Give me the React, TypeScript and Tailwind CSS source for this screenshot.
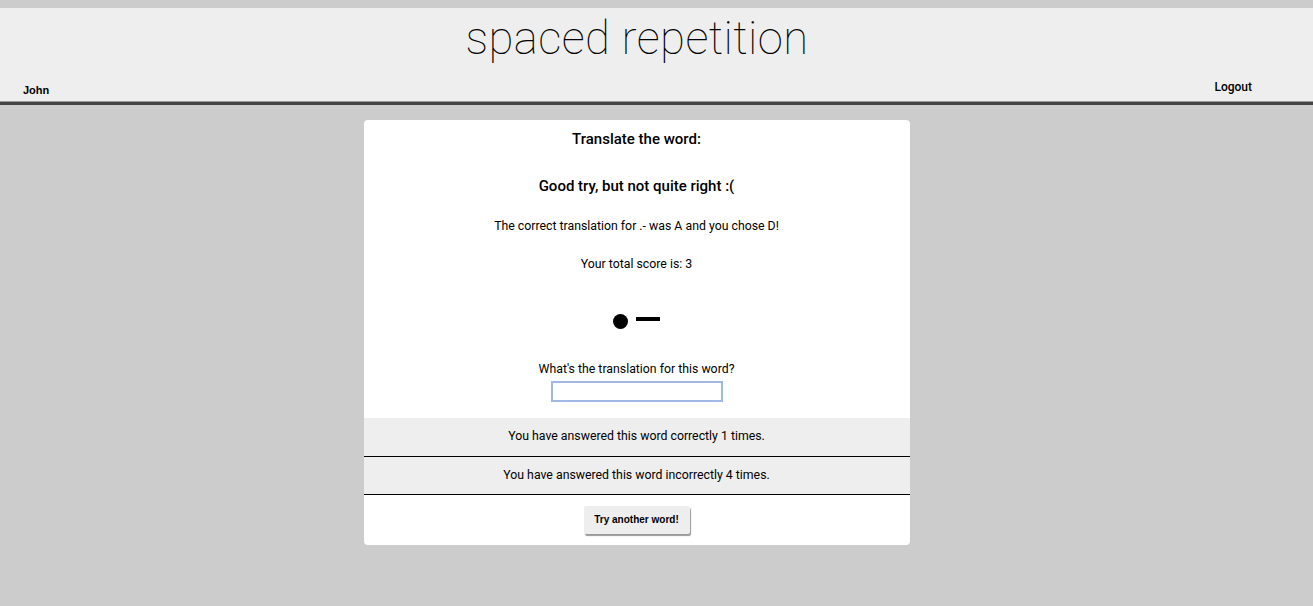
export default function App() {
  return (
    <div className="min-h-[606px] bg-[#cccccc] pt-2 font-['Roboto',sans-serif] text-black">
      <header className="h-[97px] border-b-[3px] border-[#444] bg-[#eeeeee] shadow-[0_-1px_0_#999_inset]">
        <h1 className="mr-[39px] pt-[3px] text-center text-[45.5px] font-thin leading-[56px] tracking-[0.4px] font-['Roboto',sans-serif]">
          spaced repetition
        </h1>
        <div className="mt-[11px] flex items-start justify-between pl-[23px] pr-[61px]">
          <span className="mt-[4px] text-[11px] font-bold font-['Liberation_Sans',sans-serif]">John</span>
          <button className="text-[12px] font-medium">Logout</button>
        </div>
      </header>

      <main className="mr-[40px] flex justify-center pt-[15px]">
        <div className="w-[546px] overflow-hidden rounded-[4px] bg-white text-center">
          <h2 className="mt-[10px] text-[15px] font-medium leading-[18px]">Translate the word:</h2>
          <h3 className="mt-[29px] text-[15px] font-medium leading-[18px]">Good try, but not quite right :(</h3>
          <p className="mt-[23px] text-[12.3px] leading-[16px]">The correct translation for .- was A and you chose D!</p>
          <p className="mt-[22px] text-[12.3px] leading-[16px]">Your total score is: 3</p>

          <div className="mt-[37px] flex h-[20px] items-center justify-center gap-[8px]" aria-label=".-">
            <span className="mt-[5px] block h-[15px] w-[15px] rounded-full bg-black" />
            <span className="block h-[4px] w-[24px] bg-black" />
          </div>

          <label className="mt-[32px] block text-[12.3px] leading-[16px]">What's the translation for this word?</label>
          <input
            type="text"
            className="mt-[4px] h-[21px] w-[172px] border-2 border-[#9fb8e6] bg-white outline-none"
          />

          <div className="mt-[14px] flex h-[39px] items-center justify-center border-b border-black bg-[#eeeeee] text-[12.3px]">
            You have answered this word correctly 1 times.
          </div>
          <div className="flex h-[38px] items-center justify-center border-b border-black bg-[#eeeeee] text-[12.3px]">
            You have answered this word incorrectly 4 times.
          </div>

          <div className="flex justify-center pt-[11px] pb-[11px]">
            <button className="h-[28px] w-[106px] rounded-[2px] bg-[#eeeeee] text-[10px] font-bold font-['Liberation_Sans',sans-serif] shadow-[1px_2px_1px_#999]">
              Try another word!
            </button>
          </div>
        </div>
      </main>
    </div>
  )
}
